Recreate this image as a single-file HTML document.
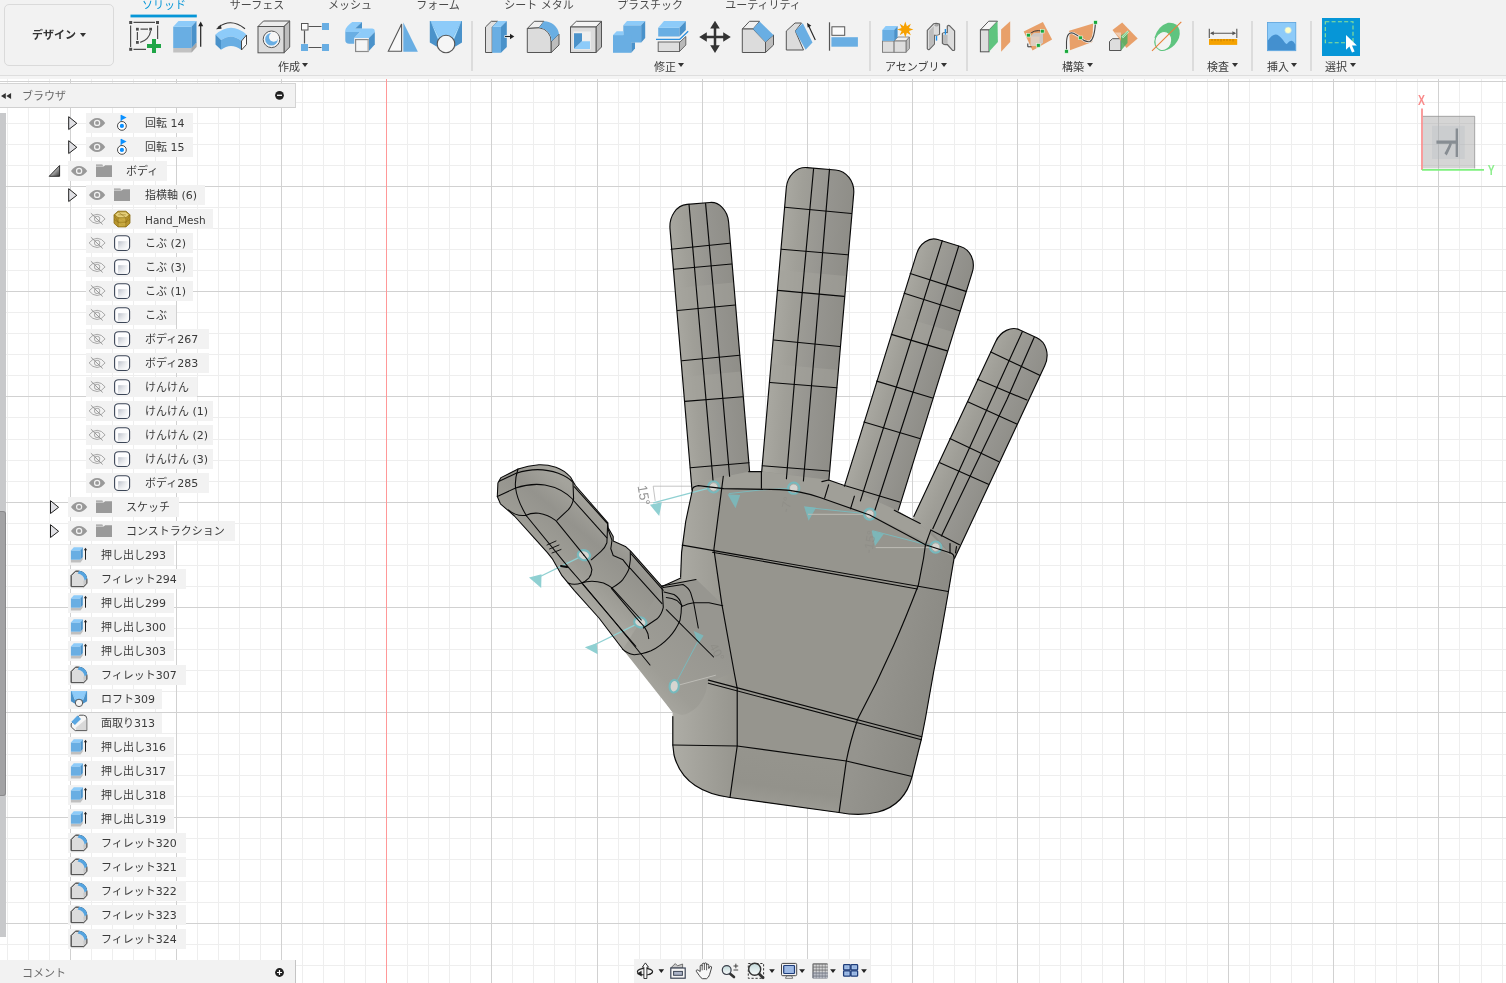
<!DOCTYPE html>
<html lang="ja"><head><meta charset="utf-8"><title>Fusion 360</title>
<style>
html,body{margin:0;padding:0}
body{width:1506px;height:983px;overflow:hidden;position:relative;background:#fff;
 font-family:"DejaVu Sans","Noto Sans CJK JP",sans-serif;font-size:11px;color:#3a3a3a}
#cv{position:absolute;left:0;top:0}
.abs{position:absolute}
#tb{position:absolute;left:0;top:0;width:1506px;height:79px;background:#f2f2f2}
#tb .bl{position:absolute;left:0;top:75px;width:1506px;height:1px;background:#dedede}
#tb .bl2{position:absolute;left:0;top:76px;width:1506px;height:3px;background:#f4f4f4}
.tab{position:absolute;top:-1px;height:14px;line-height:14px;font-size:11px;color:#4a4a4a;white-space:nowrap;transform:translateX(-50%)}
.tab.on{color:#0696d7}
.sep{position:absolute;top:21px;width:2px;height:50px;background:#dcdcdc}
.lbl{position:absolute;top:61px;height:14px;line-height:14px;font-size:11px;color:#3c3c3c;white-space:nowrap}
.car{position:absolute;width:0;height:0;border-left:3px solid transparent;border-right:3px solid transparent;border-top:4px solid #333}
.ic{position:absolute;overflow:visible}
.row{position:absolute;height:20px;background:#f2f2f2}
.row .t{position:absolute;top:0;height:20px;line-height:22px;white-space:nowrap;color:#3a3a3a;font-size:11px}
.row .t,.tab,.lbl,.gs{will-change:transform}

</style></head>
<body>
<svg id="cv" width="1506" height="983" viewBox="0 0 1506 983">
<path d="M7.5 79V983M28.5 79V983M49.5 79V983M91.5 79V983M112.5 79V983M133.5 79V983M155.5 79V983M197.5 79V983M218.5 79V983M239.5 79V983M260.5 79V983M302.5 79V983M323.5 79V983M344.5 79V983M365.5 79V983M407.5 79V983M428.5 79V983M449.5 79V983M470.5 79V983M512.5 79V983M533.5 79V983M554.5 79V983M575.5 79V983M618.5 79V983M639.5 79V983M660.5 79V983M681.5 79V983M723.5 79V983M744.5 79V983M765.5 79V983M786.5 79V983M828.5 79V983M849.5 79V983M870.5 79V983M891.5 79V983M933.5 79V983M954.5 79V983M975.5 79V983M996.5 79V983M1039.5 79V983M1060.5 79V983M1081.5 79V983M1102.5 79V983M1144.5 79V983M1165.5 79V983M1186.5 79V983M1207.5 79V983M1249.5 79V983M1270.5 79V983M1291.5 79V983M1312.5 79V983M1354.5 79V983M1375.5 79V983M1396.5 79V983M1417.5 79V983M1459.5 79V983M1481.5 79V983M1502.5 79V983M0 102.5H1506M0 123.5H1506M0 144.5H1506M0 165.5H1506M0 207.5H1506M0 228.5H1506M0 249.5H1506M0 270.5H1506M0 312.5H1506M0 333.5H1506M0 354.5H1506M0 375.5H1506M0 417.5H1506M0 439.5H1506M0 460.5H1506M0 481.5H1506M0 523.5H1506M0 544.5H1506M0 565.5H1506M0 586.5H1506M0 628.5H1506M0 649.5H1506M0 670.5H1506M0 691.5H1506M0 733.5H1506M0 754.5H1506M0 775.5H1506M0 796.5H1506M0 838.5H1506M0 859.5H1506M0 881.5H1506M0 902.5H1506M0 944.5H1506M0 965.5H1506" stroke="#eeeeee" stroke-width="1" fill="none"/>
<path d="M70.5 79V983M176.5 79V983M281.5 79V983M491.5 79V983M597.5 79V983M702.5 79V983M807.5 79V983M912.5 79V983M1017.5 79V983M1123.5 79V983M1228.5 79V983M1333.5 79V983M1438.5 79V983M0 81.5H1506M0 186.5H1506M0 291.5H1506M0 396.5H1506M0 502.5H1506M0 607.5H1506M0 712.5H1506M0 817.5H1506M0 923.5H1506" stroke="#d1d1d1" stroke-width="1" fill="none"/>
<path d="M386.5 79V983" stroke="#ff9898" stroke-width="1" fill="none"/>
<defs>
<linearGradient id="fA" gradientUnits="userSpaceOnUse" x1="676" y1="340" x2="741" y2="335"><stop offset="0" stop-color="#aaa9a2"/><stop offset=".25" stop-color="#a09f98"/><stop offset=".6" stop-color="#969590"/><stop offset="1" stop-color="#8e8d87"/></linearGradient>
<linearGradient id="fB" gradientUnits="userSpaceOnUse" x1="772" y1="335" x2="843" y2="341"><stop offset="0" stop-color="#aaa9a2"/><stop offset=".25" stop-color="#a09f98"/><stop offset=".6" stop-color="#969590"/><stop offset="1" stop-color="#8e8d87"/></linearGradient>
<linearGradient id="fC" gradientUnits="userSpaceOnUse" x1="872" y1="391" x2="934" y2="410"><stop offset="0" stop-color="#aaa9a2"/><stop offset=".25" stop-color="#a09f98"/><stop offset=".6" stop-color="#969590"/><stop offset="1" stop-color="#8d8c86"/></linearGradient>
<linearGradient id="fD" gradientUnits="userSpaceOnUse" x1="970" y1="388" x2="1031" y2="416"><stop offset="0" stop-color="#a9a8a1"/><stop offset=".25" stop-color="#9f9e97"/><stop offset=".6" stop-color="#969590"/><stop offset="1" stop-color="#8d8c86"/></linearGradient>
<linearGradient id="fT" gradientUnits="userSpaceOnUse" x1="610" y1="520" x2="560" y2="580"><stop offset="0" stop-color="#a4a39c"/><stop offset=".35" stop-color="#94938d"/><stop offset=".7" stop-color="#9c9b94"/><stop offset="1" stop-color="#a8a7a0"/></linearGradient>
<linearGradient id="pL" gradientUnits="userSpaceOnUse" x1="672" y1="650" x2="735" y2="650"><stop offset="0" stop-color="#aeada6"/><stop offset=".5" stop-color="#a2a19a"/><stop offset="1" stop-color="#97968f"/></linearGradient>
<linearGradient id="pR" gradientUnits="userSpaceOnUse" x1="880" y1="650" x2="945" y2="665"><stop offset="0" stop-color="#95948e"/><stop offset="1" stop-color="#8a8983"/></linearGradient>
<linearGradient id="pB" gradientUnits="userSpaceOnUse" x1="780" y1="745" x2="770" y2="815"><stop offset="0" stop-color="#96958e"/><stop offset=".6" stop-color="#93928b"/><stop offset="1" stop-color="#a09f98"/></linearGradient>
<linearGradient id="tB" gradientUnits="userSpaceOnUse" x1="640" y1="690" x2="700" y2="630"><stop offset="0" stop-color="#a9a8a1"/><stop offset=".3" stop-color="#9e9d96"/><stop offset="1" stop-color="#979690"/></linearGradient>
<radialGradient id="tip" cx=".5" cy="1" r="1"><stop offset="0" stop-color="#fff" stop-opacity="0"/><stop offset=".7" stop-color="#fff" stop-opacity="0"/><stop offset="1" stop-color="#fff" stop-opacity=".12"/></radialGradient>
</defs>
<g id="hand" stroke-linejoin="round" stroke-linecap="round">
<!-- finger fills -->
<path id="sA" d="M692.0 490.0L670.0 228.9C669.0 216.2 676.6 205.3 687.0 204.4L709.9 202.5C719.2 201.7 727.6 210.4 728.6 222.0L749.6 471.5V500Z" fill="url(#fA)"/>
<path id="sB" d="M761.7 471.6L786.3 187.8C787.3 175.7 796.6 166.7 807.1 167.6L835.6 170.0C846.6 171.0 854.7 181.6 853.7 193.7L828.9 480.0L828.6 484L761.5 480Z" fill="url(#fB)"/>
<path id="sC" d="M844.4 486.2L916.6 253.9C919.8 243.3 929.3 236.9 937.8 239.5L960.4 246.5C970.4 249.6 975.7 261.1 972.3 272.2L898.4 510.2L897 514L842 492Z" fill="url(#fC)"/>
<path id="sD" d="M913.8 516.5L995.6 341.7C1000.5 331.2 1011.4 325.9 1019.9 329.9L1036.8 337.8C1046.3 342.2 1049.9 354.8 1044.7 365.8L954.6 558.3L953 561L911 523Z" fill="url(#fD)"/>
<!-- palm -->
<path id="sP" d="M692.400 490L693 483L750 471.500H762.500L829 480L844 486L898 511L920 524L954 558.600L948.200 593L939.900 640L933.800 671L925.500 718L921.400 739L912.200 776Q905 805 878 812Q860 816.500 839 812.500L730 797.500Q683 791 674 755L672.800 745V700L680.600 577L681.600 552.300L685.700 521.500Z" fill="#96958e"/>
<!-- palm left side lighter -->
<path d="M692.400 490L693 483L723.300 476.300L713.900 549.300L721.800 603.800L734.100 672L737.200 688.400V746L730 797.500Q683 791 674 755L672.800 745V700L680.600 577L681.600 552.300L685.700 521.500Z" fill="url(#pL)"/>
<!-- palm right darker -->
<path d="M930.800 530.100L954 558.600L948.200 593L939.900 640L933.800 671L925.500 718L921.400 739L912.200 776Q905 805 878 812Q860 816.500 839.100 812.500L846.300 761Q850 742 857.600 719.300Q877 683 893.600 645.400Q905 620 918.300 585.300L923.500 558.500L925.500 544.700Z" fill="url(#pR)"/>
<!-- palm bottom -->
<path d="M737.200 746L846.300 761L839 812.500L730 797.500Z" fill="url(#pB)"/>
<!-- knuckle band (top of palm) slightly lighter -->
<path d="M692 483L750 471.500H762.500L829 480L844 486L898 511L920 524L954 557.500L936 547L869.600 514.300L793.800 488.500L713.500 487.500Z" fill="#a09f98"/>
<!-- thumb -->
<path id="sT" d="M680.800 578L662 586.600L630.900 551.300L625.400 546.400L613.200 540.900V536.600L608.300 528L607.700 522.600L575.400 485.500L570.500 477Q564 470 555.900 467.200Q547 464.500 538.800 464.800Q528 465.500 518.100 469L501 477.600L497.900 483.100L497.300 496.500L500.400 503.800L514.400 516L536.400 540.400L547.400 552.600L552.200 558.600L562 575.700L574.200 590.300L599 618L622.800 649.300L663.200 696.600L667.800 705.800L672.400 711.900L690 716L705 640L681 578Z" fill="url(#fT)"/>
<!-- thumb base blob -->
<path d="M663 586L696 579L722 604L734 672L707.400 683L705.900 692Q702 702 696.800 707.300Q689 714.500 681.500 714.900L672.400 712L622.800 649.300Z" fill="url(#tB)"/>
</g>
<!-- lighter crease bands on fingers -->
<g opacity=".5">
<path d="M676 288L734 282.500L735.200 305L677.500 310.500Z" fill="#a5a49d"/>
<path d="M779.500 270L846 276L844.200 296.400L777.700 290.400Z" fill="#a5a49d"/>
<path d="M899 316L953 332L947.200 350.900L891.300 334.400Z" fill="#a5a49d"/>
<path d="M683 377L741 371.500L742.500 396.800L684.900 401.400Z" fill="#a5a49d"/>
<path d="M771.500 364L838.500 370L836.800 387.700L770 382.500Z" fill="#a5a49d"/>
</g>
<!-- joint markers -->
<g id="joints">
<g stroke="#8fd0d2" fill="none" stroke-width="1.300">
<path d="M713.600 486.900L653.200 502.800"/>
<path d="M583.900 555.200L533 580"/>
<path d="M640.300 622.300L590 647"/>
</g>
<path d="M649.900 504.800L661.800 502.300L659.200 516.100Z" fill="#8fd0d2"/>
<path d="M529 577.500L541.500 574.200L541.200 588Z" fill="#8fd0d2"/>
<path d="M584.800 647.300L596.700 643.300L597.700 654.200Z" fill="#8fd0d2"/>
<g stroke="#7ab9bc" fill="none" stroke-width="1">
<path d="M793.700 488.200Q760 489 728.900 493.600"/>
<path d="M869.700 514.100L806.600 507.500"/>
<path d="M935.700 547.100L872.400 530.700"/>
<path d="M674.200 686.200L699.800 637.900"/>
</g>
<path d="M727.600 494.200L740.200 494.900L735.500 508.200Z" fill="#7ab9bc" opacity=".9"/>
<path d="M804 506.200L816 507.800L808.600 520.800Z" fill="#7ab9bc" opacity=".9"/>
<path d="M871.700 530.700L883.700 534.100L875 546Z" fill="#7ab9bc" opacity=".9"/>
<path d="M693.700 631L703.600 635.600L698.300 644Z" fill="#7ab9bc" opacity=".9"/>
<g stroke="#bdbcb6" stroke-width="1" fill="none">
<path d="M808 514.300H865M875.700 547.600H931M679 685L715.800 675.200"/>
</g>
<path d="M653.200 486.200H706M653.200 486.200L655.200 500.900" stroke="#b5b5b5" stroke-width=".8" fill="none"/>
<g fill="#d6d5d1" stroke="#76b9bd" stroke-width="2.100">
<circle cx="713.600" cy="486.900" r="5.600"/><circle cx="793.700" cy="488.200" r="5.600"/><circle cx="869.700" cy="514.100" r="5.600"/><circle cx="935.700" cy="547.100" r="5.600"/>
<ellipse cx="583.900" cy="555.200" rx="6.200" ry="5" transform="rotate(15 583.900 555.200)"/>
<ellipse cx="640.300" cy="622.300" rx="6.200" ry="5" transform="rotate(15 640.300 622.300)"/>
<ellipse cx="674.200" cy="686.200" rx="4.600" ry="6.300" transform="rotate(8 674.200 686.200)"/>
</g>
<g fill="none" stroke="#8a8984" stroke-width=".6">
<circle cx="713.600" cy="486.900" r="4.200"/><circle cx="793.700" cy="488.200" r="4.200"/><circle cx="869.700" cy="514.100" r="4.200"/><circle cx="935.700" cy="547.100" r="4.200"/>
</g>
</g>
<g id="edges" fill="none" stroke="#080808" stroke-width="1.150" stroke-linejoin="round" stroke-linecap="round">
<!-- finger A -->
<path d="M692.0 490.0L670.0 228.9C669.0 216.2 676.6 205.3 687.0 204.4L709.9 202.5C719.2 201.7 727.6 210.4 728.6 222.0L749.6 471.5L748.8 471.6H761.4"/>
<path d="M689 204.300L700.800 340L713 480M705.600 203.600L717.800 340L729.600 476.300"/>
<path d="M671.100 249.200L729.700 243.300M673.900 269.300L731.600 264M677.500 310.500L735.200 305M681.700 360.800L739.800 355.300M684.900 401.400L742.500 396.800M690.300 467.700L748.900 462.700"/>
<!-- finger B -->
<path d="M761.4 488.2V471.6"/><path d="M761.7 471.6L786.3 187.8C787.3 175.7 796.6 166.7 807.1 167.6L835.6 170.0C846.6 171.0 854.7 181.6 853.7 193.7L828.9 480.0"/>
<path d="M813.600 168.500L797.900 340L786.400 478.700M829.500 169.100L815.400 340L803.400 481"/>
<path d="M784.700 207.200L851.500 213.500M781.400 249.200L847.500 254.700M777.700 290.400L844.200 296.400M773.600 340L839.600 346.500M770 382.500L836.800 387.700M762.300 465.800L828.900 471"/>
<!-- finger C -->
<path d="M844.4 486.2L916.6 253.9C919.8 243.3 929.3 236.9 937.8 239.5L960.4 246.5C970.4 249.6 975.7 261.1 972.3 272.2L898.4 510.2"/>
<path d="M942.300 240.700L892.300 400L860.400 500.900M958.700 246.200L910.600 400L875 510"/>
<path d="M910.200 273.500L965.900 291.400M904.200 293.200L960 311M891.300 334.400L947.200 350.900M876.700 381.100L932.500 398M863.900 422L919.700 438.500"/>
<path d="M821.900 481.600L828.600 480L843.700 485.200L899.600 502"/>
<!-- finger D -->
<path d="M913.8 516.5L995.6 341.7C1000.5 331.2 1011.4 325.9 1019.9 329.9L1036.8 337.8C1046.3 342.2 1049.9 354.8 1044.7 365.8L954.6 558.3"/>
<path d="M1022.300 331.700L991.200 400L932.800 528.700M1034.200 337.200L1006.700 400L941.400 536"/>
<path d="M990.800 351.900L1039.700 375.300M977.400 379.300L1026.900 400M968.200 401.900L1016.800 423.900M949.900 438.500L998.500 461.400M939.900 462.700L988.400 484.300M930.800 530.100L959.400 544.700"/>
<path d="M894.300 510.200L920.200 523.400"/>
<!-- palm -->
<path d="M692.400 490Q692 486.500 698.400 485.600L723.600 488.600L779.400 489.600Q800 490.500 820 497.500L869.700 515L925.500 544.700L951.400 553.300Q954.500 555 954 558.600L948.200 593L939.900 640L933.800 671L925.500 718L921.400 739L912.200 776Q905 805 878 812Q860 816.500 839 812.500L730 797.500Q683 791 674 755L672.800 745V716.500"/>
<path d="M692.400 490L685.700 521.500L681.600 552.300L680.600 577"/>
<path d="M723.300 476.300L713.900 549.300L721.800 603.800L734.100 672L737.200 688.400V746L730 797.500"/>
<path d="M682.200 545.100L948.200 591.500M712.500 552.300L917.300 589"/>
<path d="M930.800 530.100L925.500 544.700L923.500 558.500L918.300 585.300Q905 620 893.600 645.400Q877 683 857.600 719.300Q850 742 846.300 761L839.100 812.500"/>
<path d="M708.400 680.100L921.800 736.700M708.400 683.200L921.400 739.800"/>
<path d="M672.800 745L737.200 746L846.300 761L911.100 776.300"/>
<path d="M828.600 484.900L824.600 498.200M854.400 496.200L850.500 508.800M950 543.500V553M956.500 546.500L955.500 553"/>
</g>
<g id="tedges" fill="none" stroke="#080808" stroke-width="1.050" stroke-linejoin="round" stroke-linecap="round">
<!-- thumb silhouette -->
<path d="M680.800 578L662 586.600L630.900 551.300L625.400 546.400L613.200 540.900V536.600L608.300 528L607.700 522.600L575.400 485.500L570.500 477Q564 470 555.900 467.200Q547 464.500 538.800 464.800Q528 465.500 518.100 469L501 477.600L497.900 483.100L497.300 496.500L500.400 503.800L514.400 516L536.400 540.400L547.400 552.600L552.200 558.600L562 575.700L574.200 590.300L599 618L622.800 649.300"/>
<!-- tip -->
<path d="M499.200 481.200L516.200 473.300M497.300 496.500L515.600 488"/>
<path d="M518 469Q514.500 480 515.600 488Q517 500 526.600 516"/>
<path d="M516.200 473.300Q538 466 558.300 473.300Q569 477.500 573 482.500L573.600 498.900Q572 506 568.100 509.900L557.100 520.100"/>
<path d="M515.600 488Q530 483 544.900 484.900Q562 488 573 499.500"/>
<path d="M508.300 509.900Q516 516.500 525.400 515.400Q532 512.500 538.800 513.300Q548 514.500 555.900 520.700L583.900 555.200"/>
<path d="M574.200 486.700L607.200 523.300M573 500L606.900 537.800"/>
<path d="M607.700 522.600L606.900 542.700Q605 548 601 551.300L591.300 559.800"/>
<path d="M526.600 516L569.300 568.300L582.100 583L613.200 620L650 665"/>
<path d="M583.900 555.200Q590 562 591.900 569.600Q591.500 575 588.800 578.100Q585 582 581.500 583Q574 585.500 568.100 583"/>
<path d="M581.500 583Q591.300 579.500 603.500 583Q608 585 612 587.900L641.300 620"/>
<path d="M612 587.900Q620 583 623 579.300Q628 572 629.100 568.300Q631 560 630.300 551.300"/>
<path d="M607.700 528L612 540.300L610.800 548.800L613.200 555.500L623 559.800L629.700 568.300"/>
<path d="M630.900 553.700L663.300 590.300M630.300 568.300L662 603.700"/>
<path d="M582.700 584.200L613.200 620L635.800 646.300"/>
<path d="M611.400 588.300L635.800 617.300L640.300 622.300"/>
<path d="M547 545L556 541M549.500 549L559 545M552 553L561 549.500" stroke-width=".9"/>
<path d="M561 566L567 567" stroke-width="2"/>
<!-- thumb base -->
<path d="M661.700 586L696 579.500M663.200 587.500L683 584.500Q689 588 690.700 592.900L693.700 602.800L698.300 628"/>
<path d="M662 586.600L663.300 607.400Q661.500 615 657.100 618.800L643.400 628"/>
<path d="M681.500 605.100Q681.500 613 680 620.300Q676 630 669.300 637.100Q661 646 651 650.800Q642 654.500 634.200 654.700Q627 653.500 622.800 649.300"/>
<path d="M640.300 622.300Q646 628 648 634L648.700 638.600"/>
<path d="M666.300 609.700L713.600 657"/>
<path d="M681.500 606.600Q688 603.500 693.700 602.800L709 602.800L722.700 605.800"/>
<path d="M666.300 597.500Q672 598 677 600.500L682.300 605.800"/>
<path d="M664 592L674 594.500Q680 598 681.500 605"/>
</g>


</svg>
<div id="tb">
<div class="bl"></div><div class="bl2"></div>
<div class="abs" style="left:4px;top:4px;width:108px;height:60px;border:1px solid #dadada;border-radius:5px;background:#f2f2f2"></div>
<div class="abs gs" style="left:32px;top:27.5px;height:16px;line-height:16px;font-size:11px;font-weight:bold;color:#333;white-space:nowrap">デザイン</div>
<div class="car" style="left:80px;top:33px"></div>
<div class="tab on" style="left:164px">ソリッド</div>
<div class="tab" style="left:257px">サーフェス</div>
<div class="tab" style="left:350px">メッシュ</div>
<div class="tab" style="left:438px">フォーム</div>
<div class="tab" style="left:538.5px">シート メタル</div>
<div class="tab" style="left:649.5px">プラスチック</div>
<div class="tab" style="left:763px">ユーティリティ</div>
<div class="sep" style="left:471px"></div>
<div class="sep" style="left:869px"></div>
<div class="sep" style="left:966px"></div>
<div class="sep" style="left:1192px"></div>
<div class="sep" style="left:1251px"></div>
<div class="sep" style="left:1310px"></div>
<div class="lbl" style="left:278px">作成</div><div class="car" style="left:302px;top:63px"></div>
<div class="lbl" style="left:654px">修正</div><div class="car" style="left:678px;top:63px"></div>
<div class="lbl" style="left:885px">アセンブリ</div><div class="car" style="left:941px;top:63px"></div>
<div class="lbl" style="left:1061.5px">構築</div><div class="car" style="left:1087px;top:63px"></div>
<div class="lbl" style="left:1206.5px">検査</div><div class="car" style="left:1232px;top:63px"></div>
<div class="lbl" style="left:1266.5px">挿入</div><div class="car" style="left:1291px;top:63px"></div>
<div class="lbl" style="left:1325px">選択</div><div class="car" style="left:1350px;top:63px"></div>
<svg class="abs" style="left:0;top:0" width="1506" height="79" viewBox="0 0 1506 79">
<defs>
<linearGradient id="gB" x1="0" y1="0" x2="0" y2="1"><stop offset="0" stop-color="#8fcdfa"/><stop offset="1" stop-color="#86c5f5"/></linearGradient>
</defs>
<rect x="130.500" y="14.600" width="66.300" height="2.800" fill="#0696d7"/>
<!-- 1 create sketch -->
<g fill="none" stroke="#4d4d4d" stroke-width="1.2">
<path d="M133.5 22.4H155M130.6 25.5V47M133.5 49.4H146M157.6 25.5V39"/>
<path d="M140.5 29.2H148M137.4 32V40"/>
<path d="M150.6 31.2A13.2 13.2 0 0 1 140.2 42.4"/>
</g>
<g fill="#4d4d4d"><rect x="129.2" y="21" width="3" height="3"/><rect x="156" y="21" width="3" height="3"/><rect x="129.2" y="47.8" width="3" height="3"/>
<rect x="136" y="27.8" width="2.8" height="2.8"/><rect x="149.2" y="27.8" width="2.8" height="2.8"/><rect x="136" y="41" width="2.8" height="2.8"/></g>
<path d="M152 39h4v5h5v4h-5v5h-4v-5h-5v-4h5z" fill="#1fa546"/>
<!-- 2 extrude -->
<path d="M173.2 48H191.5L196.5 42.5V47L191.5 52.5H173.2Z" fill="#c2c2c2"/><path d="M191.5 48L196.5 42.5V47L191.5 52.5Z" fill="#a9a9a9"/>
<rect x="173.2" y="26.7" width="18.3" height="21.3" fill="#69aee3"/>
<path d="M173.2 26.7L178.5 21.1H196.5L191.5 26.7Z" fill="#8dcbf9"/>
<path d="M191.5 26.7L196.5 21.1V42.5L191.5 48Z" fill="#4a92ca"/>
<path d="M200.7 24.5V46.8" stroke="#222" stroke-width="1.2"/><path d="M198.2 26.2L200.7 21.6L203.2 26.2Z" fill="#222"/>
<!-- 3 revolve -->
<path d="M215.5 34.5Q231 21 246.5 34.5L241.5 41Q231 32.5 221 40Z" fill="#8dcbf9"/>
<path d="M215.5 34.5L221 40V49.8L215.5 44.5Z" fill="#4a92ca"/>
<path d="M221 40Q231 32.500 241.500 41V50Q231 42 221 49.800Z" fill="#69aee3"/>
<path d="M241.5 41L246.5 35V44.500L241.500 50Z" fill="#fafafa" stroke="#444" stroke-width="1"/>
<path d="M245 28.800Q231 17.500 218 27.500" fill="none" stroke="#333" stroke-width="1.1"/><path d="M216 29.2L220.800 24.600L221.600 28.800Z" fill="#333"/>
<!-- 4 hole -->
<path d="M258 26.500L263.500 21H289.700L284 26.500Z" fill="#ececec" stroke="#555" stroke-width="1" stroke-linejoin="round"/>
<path d="M284 26.500L289.700 21V47L284 52.800Z" fill="#bdbdbd" stroke="#555" stroke-width="1" stroke-linejoin="round"/>
<rect x="258" y="26.500" width="26" height="26.300" fill="#dcdcdc" stroke="#555" stroke-width="1"/>
<circle cx="271.500" cy="39.300" r="8.300" fill="#f6f6f6" stroke="#555" stroke-width="1"/>
<circle cx="271.500" cy="39.300" r="6.300" fill="#69aee3"/><circle cx="273.700" cy="37" r="4.700" fill="#f6f6f6"/>
<!-- 5 rect pattern -->
<path d="M308.500 26.500H321.500M304.500 30.500V43.500M308.500 47.500H321.500" stroke="#555" stroke-width="1.200" fill="none"/>
<rect x="301.500" y="23.500" width="6.500" height="6.500" fill="#fafafa" stroke="#555" stroke-width="1"/>
<rect x="322" y="23" width="7" height="7" fill="#69aee3"/><rect x="301" y="44" width="7" height="7" fill="#69aee3"/><rect x="322" y="44" width="7" height="7" fill="#69aee3"/>
<!-- 6 sweep -->
<path d="M345.300 31.500H360.500L354.200 38V43.800H349.300Q345.300 43.600 345.300 40.200Z" fill="#69aee3"/>
<path d="M345.300 31.900V30Q346 26.800 352.200 22.100H362L355.100 28.600H372.400Q374.800 28.800 374.800 31V32L368.900 38H354.200L360.400 31.900Z" fill="#8dcbf9"/>
<path d="M362 22.100V28.600H355.100Z" fill="#4a92ca"/>
<path d="M368.900 38L374.800 31.900V44.500L368.900 51Z" fill="#4a92ca"/>
<rect x="355.600" y="39.600" width="12.700" height="11.900" fill="#f5f5f5" stroke="#8a8a8a" stroke-width="1.200"/>
<path d="M368.300 39.600V51.500" stroke="#b5b5b5" stroke-width="1.200"/>
<!-- 7 mirror -->
<path d="M388.300 51.300H401.600V24Z" fill="#f8f8f8" stroke="#555" stroke-width="1.100"/>
<path d="M403.300 22.500V51.800H417.900Z" fill="#69aee3"/>
<!-- 8 loft -->
<path d="M429.800 21H462V42.500L453 48H439L429.800 42.500Z" fill="#4a92ca"/>
<path d="M430.500 21H461.500L452.500 38H439.500Z" fill="#8dcbf9"/>
<path d="M430.500 21L439.500 38L437.800 39Z" fill="#a9dcfc"/><path d="M461.500 21L452.500 38L454.200 39Z" fill="#a9dcfc"/>
<circle cx="446" cy="44" r="8.800" fill="#f6f6f6" stroke="#555" stroke-width="1.100"/>
<!-- 9 press pull -->
<path d="M485.500 27L491.300 21.300H498L492.200 27V52.500H485.500Z" fill="#e0e0e0" stroke="#555" stroke-width="1"/>
<rect x="492.200" y="26.700" width="8.800" height="26.100" fill="#69aee3"/>
<path d="M492.200 26.700L497.800 21H506.800L501 26.700Z" fill="#8dcbf9"/>
<path d="M501 26.700L506.800 21V47L501 52.800Z" fill="#4a92ca"/>
<path d="M504.500 36.500H511" stroke="#fff" stroke-width="2.600"/><path d="M505 36.500H511" stroke="#222" stroke-width="1.200"/><path d="M510 33.800L514.300 36.500L510 39.200Z" fill="#222"/>
<!-- 10 fillet -->
<path d="M527.300 28.500L534.300 21.300H544L539 27.800Z" fill="#efefef" stroke="#555" stroke-width="1" stroke-linejoin="round"/>
<path d="M551 42L559 34V45L551 52.800Z" fill="#bdbdbd" stroke="#555" stroke-width="1" stroke-linejoin="round"/>
<path d="M527.300 28.500L539 27.800A13 13 0 0 1 551 42V52.500H527.300Z" fill="#dcdcdc" stroke="#555" stroke-width="1" stroke-linejoin="round"/>
<path d="M544 21.300A15 15 0 0 1 559 34L551.500 41.500A13 13 0 0 0 539 27.800Z" fill="#69aee3"/>
<!-- 11 shell -->
<path d="M570.500 27L576.300 21.300H601.500L596 27Z" fill="#f4f4f4" stroke="#555" stroke-width="1" stroke-linejoin="round"/>
<path d="M596 27L601.500 21.300V47L596 52.500Z" fill="#b9b9b9" stroke="#555" stroke-width="1" stroke-linejoin="round"/>
<rect x="570.500" y="27" width="25.500" height="25.500" fill="#dcdcdc" stroke="#555" stroke-width="1"/>
<rect x="573.300" y="31.500" width="17.500" height="18" fill="#efefef"/>
<path d="M574 33.300H582V41.300L574 49Z" fill="#4a92ca"/><path d="M574 49L582 41.300H590V49Z" fill="#8dcbf9"/>
<!-- 12 combine -->
<rect x="623.300" y="25.300" width="18" height="17.200" fill="#69aee3"/>
<path d="M623.300 25.300L627 21H645.200L641.200 25.300Z" fill="#8dcbf9"/><path d="M641.200 25.300L645.200 21V38L641.200 42.500Z" fill="#4a92ca"/>
<rect x="613" y="35.100" width="18.300" height="17.700" fill="#69aee3"/>
<path d="M613 35.100L616.700 31.300H623.300V35.100Z" fill="#8dcbf9"/><path d="M631.300 42.500H635V48.500L631.300 52.800Z" fill="#4a92ca"/>
<!-- 13 split body -->
<rect x="658.200" y="27.700" width="21.300" height="8.800" fill="#69aee3"/>
<path d="M658.200 27.700L664 21H685.800L679.500 27.700Z" fill="#8dcbf9"/><path d="M679.500 27.700L685.800 21V30L679.500 36.500Z" fill="#4a92ca"/>
<path d="M679.500 42.500L685.800 36.500V45L679.500 51.500Z" fill="#b9b9b9" stroke="#666" stroke-width="1" stroke-linejoin="round"/>
<rect x="658.200" y="42" width="21.300" height="9.500" fill="#dedede" stroke="#666" stroke-width="1"/>
<path d="M656 39.300H679.800L688.200 31.300" fill="none" stroke="#2b8fdd" stroke-width="1.300"/>
<!-- 14 move -->
<path d="M715 26V48M704 37H726" stroke="#333" stroke-width="2.500"/>
<path d="M715 20.800L719.800 28.500H710.200ZM715 53L719.800 45.300H710.200ZM699.200 37L706.800 32.200V41.800ZM730.800 37L723.200 32.200V41.800Z" fill="#333"/>
<!-- 15 chamfer -->
<path d="M742.300 29L749.500 21.300H759.600L753 29Z" fill="#f1f1f1" stroke="#555" stroke-width="1" stroke-linejoin="round"/>
<path d="M765.500 42L773.500 35V45L765.500 52.500Z" fill="#bdbdbd" stroke="#555" stroke-width="1" stroke-linejoin="round"/>
<path d="M742.300 29H753L765.500 42V52.500H742.300Z" fill="#dcdcdc" stroke="#555" stroke-width="1" stroke-linejoin="round"/>
<path d="M759.600 21.500L773.500 35.100L765.500 42L753 29.100Z" fill="#69aee3"/>
<!-- 16 draft -->
<path d="M786.300 50V31L795 23H801.500L795.300 31L803.500 50Z" fill="#dcdcdc" stroke="#555" stroke-width="1" stroke-linejoin="round"/>
<path d="M795.100 30.900L802.800 23.200L812.500 42.400L805.600 49.700Z" fill="#69aee3"/>
<path d="M815.300 40L808.500 25.500" stroke="#222" stroke-width="1.100"/><path d="M807 22.800L811.300 25.800L807.700 27.600Z" fill="#222"/>
<!-- 17 align -->
<path d="M829.500 22.300V50.700" stroke="#555" stroke-width="1.200"/>
<rect x="831.900" y="26.800" width="12.800" height="8.500" fill="#fafafa" stroke="#555" stroke-width="1"/>
<rect x="831.400" y="37.200" width="26.500" height="9.500" fill="#69aee3"/>
<!-- 18 new component -->
<path d="M894.100 41L898 37H909.500L906 41Z" fill="#f1f1f1" stroke="#777" stroke-width=".8" stroke-linejoin="round"/>
<path d="M906 41L909.500 37V48.500L906 52.300Z" fill="#bcbcbc" stroke="#777" stroke-width=".8" stroke-linejoin="round"/>
<rect x="882.500" y="41" width="11.600" height="11.300" fill="#dedede" stroke="#777" stroke-width=".9"/>
<rect x="894.100" y="41" width="11.900" height="11.300" fill="#dedede" stroke="#777" stroke-width=".9"/>
<rect x="882.300" y="29.900" width="11.800" height="11" fill="#69aee3"/>
<path d="M882.300 29.900L885.700 26H897.600L894.100 29.900Z" fill="#8dcbf9"/><path d="M894.100 29.900L897.600 26V37L894.100 40.900Z" fill="#4a92ca"/>
<path d="M905.300 21.500L906.900 26.200L910.900 23.800L909 28L913.400 29.500L909 31L910.900 35.200L906.900 32.800L905.300 37.500L903.700 32.800L899.700 35.200L901.600 31L897.200 29.500L901.600 28L899.700 23.800L903.700 26.200Z" fill="#f7a100"/>
<!-- 19 joint -->
<path d="M927.300 30.400L933.800 23.700Q936.300 22.700 939.500 24.100V34.300Q937.100 35.500 934.400 35.100V44.100L929.400 49.400Q927.800 50 927.300 48.600Z" fill="#e2e2e2" stroke="#666" stroke-width="1.200" stroke-linejoin="round"/>
<path d="M928.900 31.100L933.800 26V43.700L928.900 48.600Z" fill="#bcbcbc"/>
<path d="M934.400 25H938.900V34.200Q936.800 34.900 934.400 34.500Z" fill="#dadada"/>
<ellipse cx="936.500" cy="25.300" rx="1.700" ry=".7" fill="#c8c8c8" stroke="#777" stroke-width=".6"/>
<path d="M936.500 36V40.600" stroke="#1e90e8" stroke-width="1.400"/>
<path d="M947.300 26.200Q948.500 24.800 949.700 25.800L954.600 30.900V49.800Q953.400 51.200 952.100 49.800L947.300 44.500Q944.400 45.100 942.400 43.300V33.500Q944.400 32 947.300 32.700Z" fill="#dcdcdc" stroke="#666" stroke-width="1.200" stroke-linejoin="round"/>
<path d="M943 34.500H947.600V43.900Q944.800 44.300 943 42.900Z" fill="#bcbcbc"/>
<ellipse cx="945.300" cy="34" rx="2.200" ry=".9" fill="#ececec"/>
<path d="M945.400 29V34.700" stroke="#1e90e8" stroke-width="1.400"/>
<!-- 20 offset plane -->
<path d="M980.400 29.900L988.700 21.200H997.500L989 29.900Z" fill="#f6f6f6" stroke="#555" stroke-width="1" stroke-linejoin="round"/>
<rect x="980.400" y="29.900" width="8.600" height="21.900" fill="#dedede" stroke="#555" stroke-width="1"/>
<path d="M989 29.900L997.500 21.200L997.900 41.900L989 51.800Z" fill="#5fc47f"/>
<path d="M1001.100 29.400L1010.200 21.200V41.900L1001.100 51.800Z" fill="#e8a06a"/>
<!-- 21 plane 3pts -->
<path d="M1023.700 31.500L1042.900 22L1052.100 39.500L1032.500 50.600Z" fill="#e8a06a"/>
<path d="M1030.500 36.500L1034 33H1043V42.500L1039.500 46H1030.500Z" fill="#ddd" opacity=".75"/>
<path d="M1034 33H1043V42.500L1039.500 46V36.500H1030.500Z" fill="#c4c4c4" opacity=".7"/>
<path d="M1028.500 35.200Q1034 29 1042.400 31.200" fill="none" stroke="#333" stroke-width="1"/>
<path d="M1027.800 43.500V46.800H1031.500" fill="none" stroke="#333" stroke-width="1"/>
<g fill="#19a83c" stroke="#eafbe9" stroke-width=".6"><rect x="1026.700" y="33.400" width="3.600" height="3.600"/><rect x="1040.600" y="29.400" width="3.600" height="3.600"/><rect x="1036.600" y="43.600" width="3.600" height="3.600"/></g>
<!-- 22 plane along path -->
<path d="M1069.200 30.700L1093.100 23.500L1092.300 41.900L1070 50.200Z" fill="#e8a06a"/>
<path d="M1066.500 51.400V42Q1067 31 1073.500 33.300Q1078 35.500 1081 38.300Q1086 42.500 1090 41.500Q1094.500 39 1095.500 22.400" fill="none" stroke="#f3f3f3" stroke-width="2.400"/>
<path d="M1066.500 51.400V42Q1067 31 1073.500 33.300Q1078 35.500 1081 38.300Q1086 42.500 1090 41.500Q1094.500 39 1095.500 22.400" fill="none" stroke="#444" stroke-width="1.100"/>
<g fill="#19a83c" stroke="#eafbe9" stroke-width=".6"><rect x="1064.700" y="49.600" width="3.600" height="3.600"/><rect x="1078.700" y="36" width="3.600" height="3.600"/><rect x="1093.700" y="20.600" width="3.600" height="3.600"/></g>
<!-- 23 axis edge -->
<path d="M1109.500 41.500L1112.500 38.700H1121V50.500H1109.500Z" fill="#dedede" stroke="#555" stroke-width="1" stroke-linejoin="round"/>
<path d="M1112.500 29.900L1122.200 22.400L1137.700 38.400L1126.500 47.900Z" fill="#e8a06a"/>
<path d="M1114.500 32.500L1121 38.700V32.500Z" fill="#f0d5c0" opacity=".8"/>
<path d="M1121 35.500L1127.500 31V43L1121 50.500Z" fill="#4fae62" opacity=".85"/>
<path d="M1122.200 37.500L1128.300 31.300" stroke="#e9fbe9" stroke-width="2"/><path d="M1122.200 37.500L1128.300 31.300" stroke="#35b352" stroke-width=".9"/>
<!-- 24 axis cylinder -->
<path d="M1154.500 37.500Q1158 26 1168 22.800Q1177 21.800 1179.500 30Q1181 38 1174.500 45Q1168 51.500 1161 50Z" fill="#5fc47f"/>
<ellipse cx="1163.300" cy="41" rx="8.300" ry="9.600" transform="rotate(22 1163.300 41)" fill="#f3f3f3" stroke="#5fc47f" stroke-width="1.100"/>
<path d="M1152 50.800L1181.300 21.800" stroke="#e8813a" stroke-width="1.100"/>
<!-- 25 measure -->
<path d="M1209.300 28.800V37.900M1236.800 28.800V37.900M1211 33.300H1235" stroke="#555" stroke-width="1.100" fill="none"/>
<path d="M1210 33.300L1213.800 31.300V35.300ZM1236.200 33.300L1232.400 31.300V35.300Z" fill="#555"/>
<rect x="1209" y="39" width="28.200" height="5.900" fill="#f5a200"/>
<path d="M1212 39V41M1215 39V41M1218 39V41M1221 39V41.500M1224 39V41M1227 39V41M1230 39V41M1233 39V41.500" stroke="#b87400" stroke-width=".8"/>
<!-- 26 insert -->
<rect x="1267.400" y="22.400" width="28.400" height="28.300" fill="#8dcbf9" stroke="#5aa3dd" stroke-width=".8"/>
<path d="M1267.800 40.500Q1272 34.400 1275.500 34.400Q1279 34.400 1283 40Q1285.500 43.800 1286.800 44Q1289.500 40.500 1291.600 40.700Q1293.500 40.800 1295.400 44.500V50.300H1267.800Z" fill="#4490cf"/>
<circle cx="1288.100" cy="30.200" r="3.300" fill="#ffffc9" stroke="#a8d3ee" stroke-width=".6"/>
<!-- 27 select -->
<rect x="1322" y="18" width="38" height="38" fill="#0696d7"/>
<rect x="1325.300" y="21.700" width="27.700" height="21" fill="none" stroke="#93e493" stroke-width="1.100" stroke-dasharray="4 2.300"/>
<path d="M1346 35V49.800L1349.400 46.600L1352 52.600L1354.600 51.500L1352 45.600L1356.900 45.600Z" fill="#fff"/>
</svg>
</div>

<div class="abs" style="left:0;top:113px;width:5.8px;height:824px;background:#c8c9cb"></div>
<div class="abs" style="left:0;top:511px;width:4.8px;height:283px;background:#a2a2a4;border:1px solid #8a8a8c;border-left:0;border-radius:0 3px 3px 0"></div>
<div class="abs" style="left:0;top:83px;width:295px;height:23px;background:#f2f2f2;border-top:1px solid #d4d4d4;border-bottom:1px solid #d0d0d0;border-right:1px solid #d4d4d4;box-sizing:content-box"></div>
<div class="abs gs" style="left:22px;top:88.5px;height:16px;line-height:16px;font-size:11px;color:#6a6a6a;white-space:nowrap">ブラウザ</div>
<div class="abs" style="left:0;top:960px;width:295px;height:23px;background:#f2f2f2;border-right:1px solid #c4c4c4"></div>
<div class="abs gs" style="left:22px;top:965.5px;height:16px;line-height:16px;font-size:11px;color:#6a6a6a;white-space:nowrap">コメント</div>
<div class="row" style="left:86px;top:113px;width:106.5px"><span class="t" style="left:58.5px">回転 14</span></div>
<div class="row" style="left:86px;top:137px;width:106.5px"><span class="t" style="left:58.5px">回転 15</span></div>
<div class="row" style="left:68px;top:161px;width:99.0px"><span class="t" style="left:58.4px">ボディ</span></div>
<div class="row" style="left:86px;top:185px;width:118.7px"><span class="t" style="left:58.5px">指横軸 (6)</span></div>
<div class="row" style="left:86px;top:209px;width:126.6px"><span class="t" style="left:58.5px"><span style="font-size:10.5px">Hand_Mesh</span></span></div>
<div class="row" style="left:86px;top:233px;width:106.5px"><span class="t" style="left:58.5px">こぶ (2)</span></div>
<div class="row" style="left:86px;top:257px;width:106.5px"><span class="t" style="left:58.5px">こぶ (3)</span></div>
<div class="row" style="left:86px;top:281px;width:106.5px"><span class="t" style="left:58.5px">こぶ (1)</span></div>
<div class="row" style="left:86px;top:305px;width:90.2px"><span class="t" style="left:58.5px">こぶ</span></div>
<div class="row" style="left:86px;top:329px;width:123.0px"><span class="t" style="left:58.5px">ボディ267</span></div>
<div class="row" style="left:86px;top:353px;width:123.0px"><span class="t" style="left:58.5px">ボディ283</span></div>
<div class="row" style="left:86px;top:377px;width:110.5px"><span class="t" style="left:58.5px">けんけん</span></div>
<div class="row" style="left:86px;top:401px;width:126.6px"><span class="t" style="left:58.5px">けんけん (1)</span></div>
<div class="row" style="left:86px;top:425px;width:126.6px"><span class="t" style="left:58.5px">けんけん (2)</span></div>
<div class="row" style="left:86px;top:449px;width:126.6px"><span class="t" style="left:58.5px">けんけん (3)</span></div>
<div class="row" style="left:86px;top:473px;width:123.0px"><span class="t" style="left:58.5px">ボディ285</span></div>
<div class="row" style="left:68px;top:497px;width:110.7px"><span class="t" style="left:58.4px">スケッチ</span></div>
<div class="row" style="left:68px;top:521px;width:166.7px"><span class="t" style="left:58.4px">コンストラクション</span></div>
<div class="row" style="left:68px;top:545px;width:106.2px"><span class="t" style="left:33.3px">押し出し293</span></div>
<div class="row" style="left:68px;top:569px;width:117.6px"><span class="t" style="left:33.3px">フィレット294</span></div>
<div class="row" style="left:68px;top:593px;width:106.2px"><span class="t" style="left:33.3px">押し出し299</span></div>
<div class="row" style="left:68px;top:617px;width:106.2px"><span class="t" style="left:33.3px">押し出し300</span></div>
<div class="row" style="left:68px;top:641px;width:106.2px"><span class="t" style="left:33.3px">押し出し303</span></div>
<div class="row" style="left:68px;top:665px;width:117.6px"><span class="t" style="left:33.3px">フィレット307</span></div>
<div class="row" style="left:68px;top:689px;width:93.7px"><span class="t" style="left:33.3px">ロフト309</span></div>
<div class="row" style="left:68px;top:713px;width:93.7px"><span class="t" style="left:33.3px">面取り313</span></div>
<div class="row" style="left:68px;top:737px;width:106.2px"><span class="t" style="left:33.3px">押し出し316</span></div>
<div class="row" style="left:68px;top:761px;width:106.2px"><span class="t" style="left:33.3px">押し出し317</span></div>
<div class="row" style="left:68px;top:785px;width:106.2px"><span class="t" style="left:33.3px">押し出し318</span></div>
<div class="row" style="left:68px;top:809px;width:106.2px"><span class="t" style="left:33.3px">押し出し319</span></div>
<div class="row" style="left:68px;top:833px;width:117.6px"><span class="t" style="left:33.3px">フィレット320</span></div>
<div class="row" style="left:68px;top:857px;width:117.6px"><span class="t" style="left:33.3px">フィレット321</span></div>
<div class="row" style="left:68px;top:881px;width:117.6px"><span class="t" style="left:33.3px">フィレット322</span></div>
<div class="row" style="left:68px;top:905px;width:117.6px"><span class="t" style="left:33.3px">フィレット323</span></div>
<div class="row" style="left:68px;top:929px;width:117.6px"><span class="t" style="left:33.3px">フィレット324</span></div>
<svg class="abs" style="left:0;top:0" width="300" height="983" viewBox="0 0 300 983">
<defs>
<linearGradient id="gOpen" x1="0" y1="0" x2="1" y2="1"><stop offset="0" stop-color="#fff"/><stop offset=".45" stop-color="#bbb"/><stop offset="1" stop-color="#333"/></linearGradient>
<linearGradient id="gBody" x1="0" y1="0" x2="1" y2="0"><stop offset="0" stop-color="#b9bec8"/><stop offset="1" stop-color="#f4f5f7"/></linearGradient>
<linearGradient id="gBody2" x1="0" y1="0" x2="0" y2="1"><stop offset="0" stop-color="#fff" stop-opacity=".0"/><stop offset="1" stop-color="#fff" stop-opacity=".75"/></linearGradient>
<symbol id="i-arrow" overflow="visible"><path d="M0.500 -6.300L8.600 0.300L0.500 6.500Z" fill="#e1e1e5" stroke="#1e1e1e" stroke-width="1" stroke-linejoin="round"/></symbol>
<symbol id="i-open" overflow="visible"><path d="M9.600 -5.500V5.300H-0.800Z" fill="url(#gOpen)" stroke="#1e1e1e" stroke-width=".9" stroke-linejoin="round"/></symbol>
<symbol id="i-eye" overflow="visible"><path d="M-8.100 -0.100Q-4.500 -5 0 -5Q4.500 -5 8.100 -0.100Q4.500 4.900 0 4.900Q-4.500 4.900 -8.100 -0.100Z" fill="#999"/><circle cx="0" cy="-0.100" r="2.550" fill="#999" stroke="#f2f2f2" stroke-width="1.250"/></symbol>
<symbol id="i-hid" overflow="visible"><path d="M-8 -0.100Q-4.500 -4.700 0 -4.700Q4.500 -4.700 8 -0.100Q4.500 4.500 0 4.500Q-4.500 4.500 -8 -0.100Z" fill="none" stroke="#9a9a9a" stroke-width=".85"/><circle cx="0" cy="-0.100" r="2.700" fill="none" stroke="#9a9a9a" stroke-width=".85"/><path d="M-6.200 -5.800L5.600 5.500" stroke="#8a8a8a" stroke-width=".85"/></symbol>
<symbol id="i-joint" overflow="visible"><path d="M7.100 -8V-1.600" stroke="#0a90ff" stroke-width="1"/><path d="M7 -8.200L12.600 -5.400L7 -2.600Z" fill="#0a90ff"/><circle cx="7.900" cy="2.900" r="4.400" fill="#fff" stroke="#333" stroke-width=".9"/><circle cx="7.900" cy="2.900" r="2.100" fill="#0a90ff"/></symbol>
<symbol id="i-folder" overflow="visible"><path d="M0 -6.400H6.300L7.200 -5.300H0Z" fill="#9a9a9a"/><path d="M0 -4.600H7.600L9.200 -5.800H16V6H0Z" fill="#9a9a9a"/></symbol>
<symbol id="i-body" overflow="visible"><rect x=".6" y="-7.300" width="15" height="14.800" rx="4" ry="3.600" fill="#fdfdfe" stroke="#3c4657" stroke-width="1.100"/><rect x="4.200" y="-1.800" width="9.600" height="8.300" fill="url(#gBody)"/><rect x="4.200" y="-1.800" width="9.600" height="8.300" fill="url(#gBody2)"/></symbol>
<symbol id="i-mesh" overflow="visible"><path d="M0 -4.200L4 -7.800H12L16 -4.200V4.200L12 7.900H4L0 4.200Z" fill="#b8962e" stroke="#8a6d14" stroke-width=".8" stroke-linejoin="round"/><path d="M0.600 -4.200L4.200 -7.200H11.800L15.400 -4.200L11.800 -1.300H4.200Z" fill="#e6d07a" stroke="#8a6d14" stroke-width=".6"/><path d="M4.200 -1.300V7.600M11.800 -1.300V7.600M0 0.300L4.200 3.200H11.800L16 0.300M4.200 -1.300L11.800 3.200M4.200 3.200L11.800 7.600M0 -4.200L4.200 3.200M16 -4.200L11.800 3.200M4.200 -7.200L11.800 -1.300M4.200 -4.200H11.800" stroke="#8a6d14" stroke-width=".5" fill="none"/><path d="M4.600 -0.800H11.400V2.700H4.600ZM4.600 3.700H11.400V7.200H4.600Z" fill="#d9bd55" opacity=".55"/></symbol>
<symbol id="i-ext" overflow="visible"><path d="M0 4.700H9.600L11.900 2.100V4.600L9.600 7.500H0Z" fill="#bfbfbf"/><rect x="0" y="-4.600" width="9.600" height="9.300" fill="#69aee3"/><path d="M0 -4.600L2.900 -7.800H11.900L9.600 -4.600Z" fill="#8dcbf9"/><path d="M9.600 -4.600L11.900 -7.800V2.100L9.600 4.700Z" fill="#4a92ca"/><path d="M14.600 -5.500V4.700" stroke="#222" stroke-width="1"/><path d="M12.900 -4.700L14.600 -7.300L16.300 -4.700Z" fill="#222"/></symbol>
<symbol id="i-fil" overflow="visible"><path d="M12.500 1.500L15.900 0.500V4.500L12.800 7.600Z" fill="#c4c4c4"/><path d="M0.300 7.600V-3.500L4.600 -7.800H7.600A8.300 8.300 0 0 1 15.900 0.500V4.500L12.800 7.600Z" fill="#dcdcdc" stroke="#555" stroke-width="1" stroke-linejoin="round"/><path d="M12.400 1.800L15.900 0.300V4.500L12.800 7.600Z" fill="#c9c9c9"/><path d="M0.300 7.600V-3.500L4.600 -7.800H7.600A8.300 8.300 0 0 1 15.900 0.500V4.500L12.800 7.600Z" fill="none" stroke="#555" stroke-width="1" stroke-linejoin="round"/><path d="M8.300 -8.200A8.800 8.800 0 0 1 16.400 -0.800L13.700 1.600A7.500 7.500 0 0 0 6.700 -5.600Z" fill="#55a4e0"/></symbol>
<symbol id="i-loft" overflow="visible"><path d="M0 -8H16.200V2.300L12.500 4.500H3.700L0 2.300Z" fill="#4a92ca"/><path d="M0.400 -8H15.800L11.300 0.500H4.900Z" fill="#8dcbf9"/><path d="M0.400 -8L4.900 0.500L4 1.200Z" fill="#aadcfc"/><path d="M15.800 -8L11.300 0.500L12.200 1.200Z" fill="#aadcfc"/><circle cx="8.100" cy="3.900" r="3.700" fill="#f4f4f4" stroke="#555" stroke-width="1"/></symbol>
<symbol id="i-cham" overflow="visible"><path d="M8.700 -7.800H12.500Q15.900 -7.800 15.900 -4.300V7.600H4.300L0.300 3.900V0.800Z" fill="#f6f6f6" stroke="#555" stroke-width="1" stroke-linejoin="round"/><path d="M4.600 4.900L15.400 -4V7.100H5.300Z" fill="#d9d9d9"/><path d="M0.500 -1.200L6.600 -7.600L10.100 -4.100L4 2Z" fill="#5aa7e2"/></symbol>
</defs>
<use href="#i-arrow" x="68.2" y="123"/>
<use href="#i-eye" x="97.1" y="123"/>
<use href="#i-joint" x="114" y="123"/>
<use href="#i-arrow" x="68.2" y="147"/>
<use href="#i-eye" x="97.1" y="147"/>
<use href="#i-joint" x="114" y="147"/>
<use href="#i-open" x="50" y="171"/>
<use href="#i-eye" x="79.1" y="171"/>
<use href="#i-folder" x="96" y="171"/>
<use href="#i-arrow" x="68.2" y="195"/>
<use href="#i-eye" x="97.1" y="195"/>
<use href="#i-folder" x="114" y="195"/>
<use href="#i-hid" x="97.1" y="219"/>
<use href="#i-mesh" x="114" y="219"/>
<use href="#i-hid" x="97.1" y="243"/>
<use href="#i-body" x="114" y="243"/>
<use href="#i-hid" x="97.1" y="267"/>
<use href="#i-body" x="114" y="267"/>
<use href="#i-hid" x="97.1" y="291"/>
<use href="#i-body" x="114" y="291"/>
<use href="#i-hid" x="97.1" y="315"/>
<use href="#i-body" x="114" y="315"/>
<use href="#i-hid" x="97.1" y="339"/>
<use href="#i-body" x="114" y="339"/>
<use href="#i-hid" x="97.1" y="363"/>
<use href="#i-body" x="114" y="363"/>
<use href="#i-hid" x="97.1" y="387"/>
<use href="#i-body" x="114" y="387"/>
<use href="#i-hid" x="97.1" y="411"/>
<use href="#i-body" x="114" y="411"/>
<use href="#i-hid" x="97.1" y="435"/>
<use href="#i-body" x="114" y="435"/>
<use href="#i-hid" x="97.1" y="459"/>
<use href="#i-body" x="114" y="459"/>
<use href="#i-eye" x="97.1" y="483"/>
<use href="#i-body" x="114" y="483"/>
<use href="#i-arrow" x="50" y="507"/>
<use href="#i-eye" x="79.1" y="507"/>
<use href="#i-folder" x="96" y="507"/>
<use href="#i-arrow" x="50" y="531"/>
<use href="#i-eye" x="79.1" y="531"/>
<use href="#i-folder" x="96" y="531"/>
<use href="#i-ext" x="70.9" y="555"/>
<use href="#i-fil" x="70.9" y="579"/>
<use href="#i-ext" x="70.9" y="603"/>
<use href="#i-ext" x="70.9" y="627"/>
<use href="#i-ext" x="70.9" y="651"/>
<use href="#i-fil" x="70.9" y="675"/>
<use href="#i-loft" x="70.9" y="699"/>
<use href="#i-cham" x="70.9" y="723"/>
<use href="#i-ext" x="70.9" y="747"/>
<use href="#i-ext" x="70.9" y="771"/>
<use href="#i-ext" x="70.9" y="795"/>
<use href="#i-ext" x="70.9" y="819"/>
<use href="#i-fil" x="70.9" y="843"/>
<use href="#i-fil" x="70.9" y="867"/>
<use href="#i-fil" x="70.9" y="891"/>
<use href="#i-fil" x="70.9" y="915"/>
<use href="#i-fil" x="70.9" y="939"/>
<path d="M1 96L5.800 93V99ZM6.300 96L11.100 93V99Z" fill="#333"/>
<circle cx="279.500" cy="95.300" r="4.400" fill="#222"/><path d="M277 95.300H282" stroke="#fff" stroke-width="1.300"/>
<circle cx="279.500" cy="972.500" r="4.400" fill="#222"/><path d="M277 972.500H282M279.500 970V975" stroke="#fff" stroke-width="1.200"/>
</svg>
<div class="abs" style="left:634px;top:959px;width:236px;height:24px;background:#f2f2f2"></div>
<svg class="abs" style="left:0;top:0;pointer-events:none;will-change:transform" width="1506" height="983" viewBox="0 0 1506 983">
<defs>
<linearGradient id="gMag" x1="0" y1="0" x2="0" y2="1"><stop offset="0" stop-color="#c3dadb"/><stop offset="1" stop-color="#f6f9f9"/></linearGradient>
<linearGradient id="gGrid" x1="0" y1="0" x2="0" y2="1"><stop offset="0" stop-color="#6b6b6b"/><stop offset="1" stop-color="#55585f"/></linearGradient>
<linearGradient id="gGridW" x1="0" y1="0" x2="0" y2="1"><stop offset="0" stop-color="#fff"/><stop offset=".5" stop-color="#f4f5f8"/><stop offset="1" stop-color="#b9bfd0"/></linearGradient>
<pattern id="pGrid" x="813.400" y="964.200" width="3" height="3" patternUnits="userSpaceOnUse"><rect x=".5" y=".5" width="2" height="2" fill="#fff"/></pattern>
</defs>
<!-- angle labels -->
<text x="0" y="0" transform="translate(637.500 486) rotate(80)" font-family="Liberation Sans, sans-serif" font-size="13.500" fill="#969696">15°</text>
<text x="0" y="0" transform="translate(789 513) rotate(-78)" font-family="Liberation Sans, sans-serif" font-size="12" fill="#8b8a84" opacity=".55">-7°</text>
<text x="0" y="0" transform="translate(872 554) rotate(-80)" font-family="Liberation Sans, sans-serif" font-size="12.500" fill="#8b8a84" opacity=".55">-15°</text>
<text x="0" y="0" transform="translate(709 646) rotate(62)" font-family="Liberation Sans, sans-serif" font-size="12" fill="#8b8a84" opacity=".7">40°</text>
<!-- view cube -->
<rect x="1422.900" y="116" width="52" height="52.400" fill="#9c9c9c" fill-opacity=".42"/>
<path d="M1422.900 116.300H1474.700V168.400" fill="none" stroke="#8e8e8e" stroke-opacity=".7" stroke-width="1"/>
<rect x="1432" y="125.900" width="32.800" height="33" fill="#b4bac0" fill-opacity=".3"/>
<text transform="translate(1439 142.700) rotate(90) scale(1 .76)" text-anchor="middle" font-family="Liberation Sans, Noto Sans CJK JP, sans-serif" font-size="32" font-weight="500" fill="#878d93" x="0" y="0">下</text>
<path d="M1422 108.500V170.100" stroke="#f87c7c" stroke-width="1.500"/>
<path d="M1422 169.900H1484" stroke="#7df07d" stroke-width="1.600"/>
<text transform="translate(1421.400 104.800) scale(.72 1)" text-anchor="middle" font-family="Liberation Sans, sans-serif" font-size="14.500" font-weight="bold" fill="#f98a8a" x="0" y="0">X</text>
<text transform="translate(1491.300 174.600) scale(.72 1)" text-anchor="middle" font-family="Liberation Sans, sans-serif" font-size="14.500" font-weight="bold" fill="#8eee8e" x="0" y="0">Y</text>
<!-- nav: orbit -->
<ellipse cx="645" cy="971.700" rx="7.600" ry="3.300" fill="none" stroke="#222" stroke-width="1.200"/>
<path d="M636.800 973.700L641.500 970.800L641.800 976.500Z" fill="#222"/>
<path d="M643.900 978.500V967.200H642.300L645.400 962.900L648.500 967.200H646.900V978.500Z" fill="#fafafa" stroke="#222" stroke-width=".9" stroke-linejoin="round"/>
<path d="M649 974.600Q651.500 973.800 652.500 972.200" fill="none" stroke="#222" stroke-width="1.200"/>
<path d="M658.500 969.200H664.100L661.300 972.900Z" fill="#222"/>
<!-- nav: look at -->
<path d="M670.700 968L675.300 963.600L677.500 965.800L682.600 964V968Z" fill="#c9c9c9" stroke="#555" stroke-width=".8" stroke-linejoin="round"/>
<rect x="670.800" y="968" width="14.400" height="10.200" fill="#f4f4f4" stroke="#3c4556" stroke-width="1.200"/>
<rect x="673.600" y="971.400" width="8.800" height="3.900" fill="#aab2c6" stroke="#3c4556" stroke-width="1"/>
<!-- nav: pan hand -->
<path d="M700.200 971.500V966.300Q700.200 965 701.200 965Q702.200 965 702.200 966.300V964.400Q702.200 963.200 703.300 963.200Q704.400 963.200 704.400 964.400V963.900Q704.400 962.900 705.500 962.900Q706.600 962.900 706.600 964.100V965.200Q706.600 964.100 707.700 964.100Q708.800 964.100 708.800 965.500V968.500Q709.500 966.300 710.800 966.300Q712 966.500 711.500 968L709.600 974.500Q708.800 977.500 706.500 978.700H702.500Q700.800 978 699.500 975.800L696.300 971.300Q695.900 970.300 696.900 969.900Q697.900 969.700 698.700 970.500Z" fill="#f8f8f8" stroke="#333" stroke-width=".9" stroke-linejoin="round"/>
<path d="M702.200 966.300V970.300M704.400 964.400V970M706.600 965.200V970.300" stroke="#333" stroke-width=".8" fill="none"/>
<!-- nav: zoom -->
<path d="M729.800 973.400L734 977" stroke="#333" stroke-width="2.600" stroke-linecap="round"/>
<circle cx="726.700" cy="970.100" r="4.400" fill="url(#gMag)" stroke="#3a3f4a" stroke-width="1.200"/>
<path d="M733.500 966H738.200M735.850 963.700V968.300M733.500 970H738.200" stroke="#333" stroke-width=".9"/>
<!-- nav: zoom window -->
<rect x="748.300" y="963.500" width="15.300" height="14.800" fill="none" stroke="#333" stroke-width="1" stroke-dasharray="2.200 1.800"/>
<path d="M759 973.700L763 977.700" stroke="#333" stroke-width="2.800" stroke-linecap="round"/>
<circle cx="754.700" cy="969.200" r="6" fill="url(#gMag)" stroke="#333" stroke-width="1.400"/>
<path d="M769.200 969.200H774.800L772 972.900Z" fill="#222"/>
<!-- nav: display -->
<rect x="781.500" y="963.400" width="15.200" height="12.300" rx="1.200" fill="#f2f2f2" stroke="#444" stroke-width="1"/>
<rect x="783.700" y="965.500" width="10.800" height="8" rx=".8" fill="#9db9e4" stroke="#1f3d7a" stroke-width="1.200"/>
<path d="M786.500 976L785.500 978.300H792.700L791.700 976Z" fill="#fafafa" stroke="#555" stroke-width=".8" stroke-linejoin="round"/>
<path d="M799.200 969.200H805L802.100 972.900Z" fill="#222"/>
<!-- nav: grid -->
<rect x="812.400" y="963.200" width="15.500" height="15.300" rx="1.300" fill="url(#gGrid)"/>
<rect x="813.400" y="964.200" width="14.500" height="14.300" fill="url(#pGrid)"/>
<rect x="812.400" y="972" width="15.500" height="6.500" rx="1" fill="#8f97b0" opacity=".35"/>
<path d="M830.100 969.200H835.800L833 972.900Z" fill="#222"/>
<!-- nav: viewports -->
<g fill="#a9c4ea" stroke="#1f3d7a" stroke-width="1.300"><rect x="843.600" y="964.600" width="6.600" height="5.400" rx=".8"/><rect x="851" y="964.600" width="6.600" height="5.400" rx=".8"/><rect x="843.600" y="970.800" width="6.600" height="5.400" rx=".8"/><rect x="851" y="970.800" width="6.600" height="5.400" rx=".8"/></g>
<g fill="#8fb0e0"><rect x="845.400" y="966.300" width="3" height="2"/><rect x="852.800" y="966.300" width="3" height="2"/><rect x="845.400" y="972.500" width="3" height="2"/><rect x="852.800" y="972.500" width="3" height="2"/></g>
<path d="M861.100 969.200H866.900L864 972.900Z" fill="#222"/>
</svg>

</body></html>
